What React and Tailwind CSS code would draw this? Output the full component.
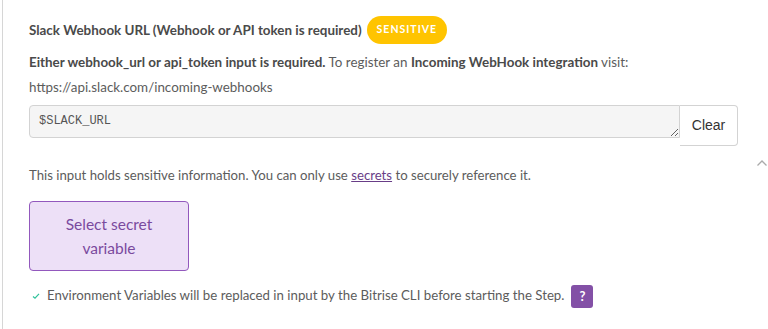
import React, { useState } from 'react';

function App() {
    const [value, setValue] = useState('$SLACK_URL');

    return (
        <div className="w-[768px] h-[329px] bg-white font-['Lato',sans-serif] text-[#5c5c5c] overflow-hidden">
            <div className="h-full ml-[2px] border-l border-[#d6d6d6] pl-[26px] pr-[30px] pt-[16px] relative">
                <div className="flex items-center gap-[5px]">
                    <span className="text-[13.4px] font-bold text-[#4a4a4a]">
                        Slack Webhook URL (Webhook or API token is required)
                    </span>
                    <span className="bg-[#ffc400] text-white text-[10.5px] font-bold tracking-[1px] rounded-full px-[10px] h-[28px] flex items-center">
                        SENSITIVE
                    </span>
                </div>

                <p className="text-[13.4px] mt-[8px] leading-[20px]">
                    <b className="text-[#4a4a4a]">Either webhook_url or api_token input is required.</b> To register an{' '}
                    <b className="text-[#4a4a4a]">Incoming WebHook integration</b> visit:
                </p>
                <p className="text-[13.4px] mt-[5px] leading-[20px]">https://api.slack.com/incoming-webhooks</p>

                <div className="flex items-start mt-[8px]">
                    <textarea
                        value={value}
                        onChange={(e) => setValue(e.target.value)}
                        rows={1}
                        className="flex-1 h-[33px] bg-[#f5f5f5] border border-[#d3d3d3] rounded-l-[4px] px-[9px] py-[7px] text-[12px] font-['Liberation_Mono',monospace] text-[#555] leading-[17px] outline-none"
                    />
                    <button className="w-[58px] h-[41px] bg-white border border-[#d3d3d3] border-l-0 rounded-r-[4px] text-[14px] font-['Liberation_Sans',sans-serif] text-[#333]">
                        Clear
                    </button>
                </div>

                <p className="text-[13.2px] mt-[20px]">
                    This input holds sensitive information. You can only use{' '}
                    <a href="#" className="text-[#683d87] underline">secrets</a> to securely reference it.
                </p>

                <button className="mt-[15px] w-[160px] h-[70px] bg-[#ede0f7] border border-[#9258bd] rounded-[4px] text-[15.5px] leading-[24px] text-[#7a4a9e] px-[20px]">
                    Select secret variable
                </button>

                <div className="flex items-center mt-[14px] text-[13.25px]">
                    <svg width="8" height="8" viewBox="0 0 8 8" className="ml-[3px] mr-[7px]">
                        <path d="M1 4.5 L3 6.2 L7 1.8" fill="none" stroke="#2fc29a" strokeWidth="1.2" />
                    </svg>
                    <span>Environment Variables will be replaced in input by the Bitrise CLI before starting the Step.</span>
                    <span className="ml-[7px] w-[22px] h-[23px] bg-[#8350a6] rounded-[3px] text-white text-[13px] font-bold flex items-center justify-center">?</span>
                </div>

                <svg width="12" height="8" viewBox="0 0 12 8" className="absolute right-[0px] top-[159px]">
                    <path d="M1.5 6.5 L6 2 L10.5 6.5" fill="none" stroke="#aaa" strokeWidth="1.3" />
                </svg>
            </div>
        </div>
    );
}

export default App;
